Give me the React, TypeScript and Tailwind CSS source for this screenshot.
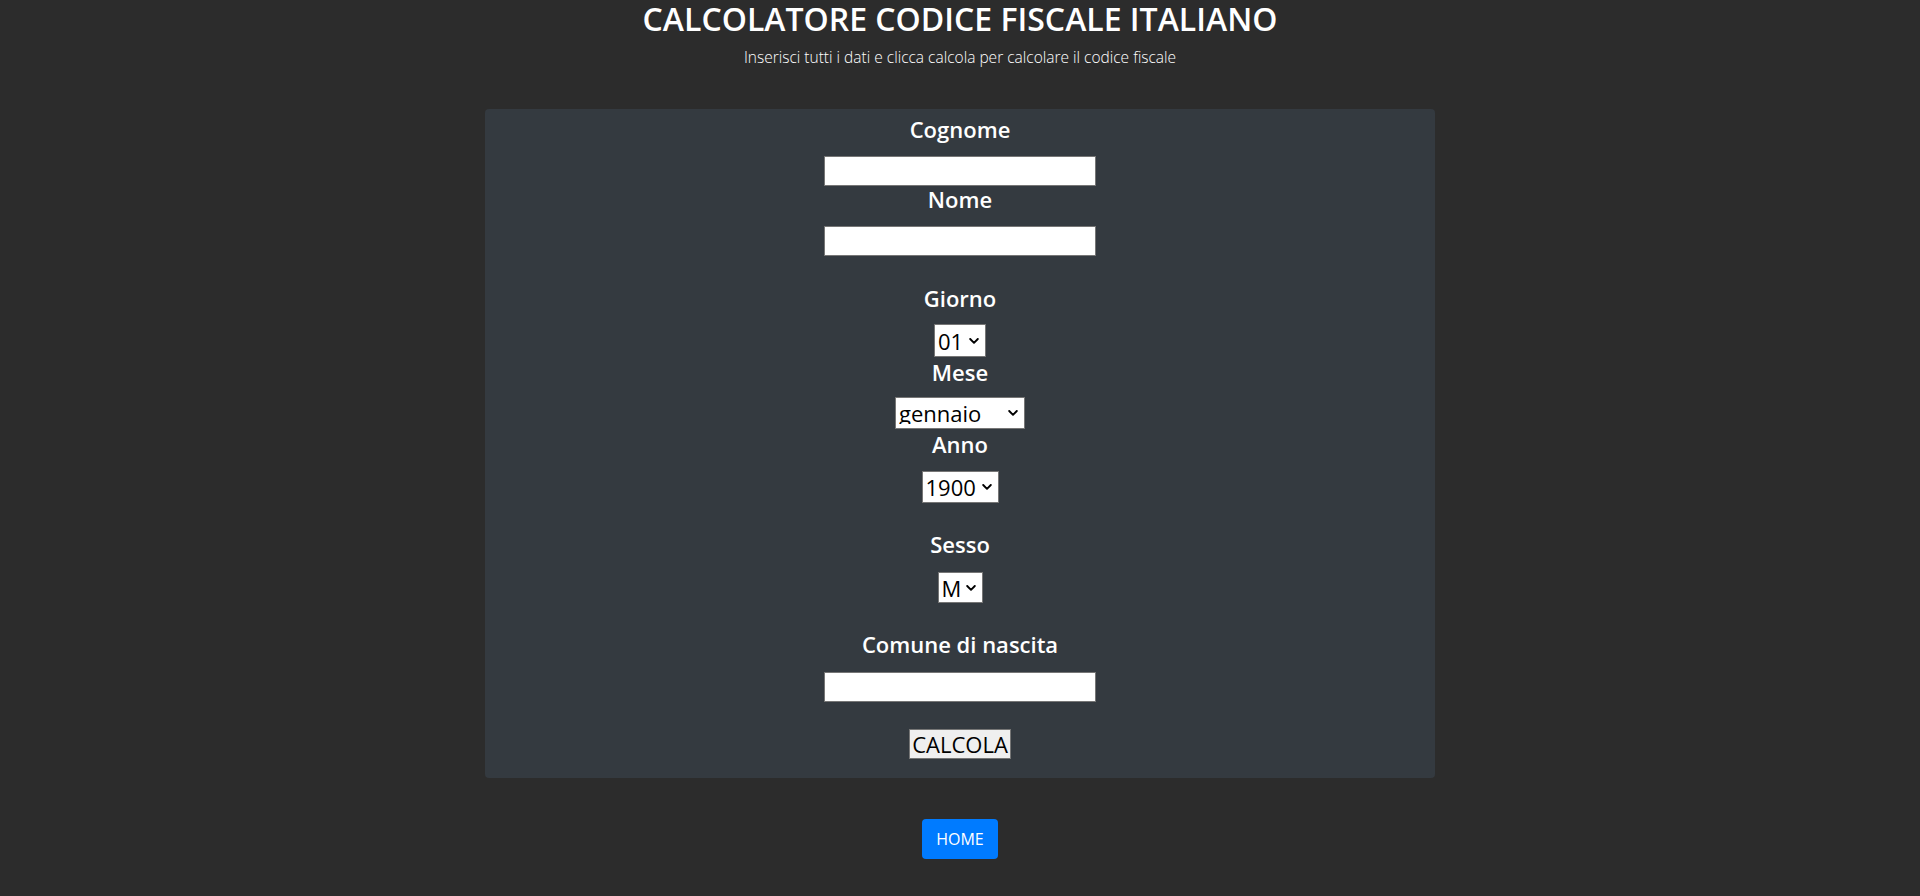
import React from "react";

const font = { fontFamily: '"Open Sans", "Noto Sans", Arial, sans-serif' };

function Chevron() {
  return (
    <svg width="10" height="6" viewBox="0 0 10 6" className="pointer-events-none absolute right-[7px] top-1/2 -translate-y-1/2">
      <path d="M1.2 1 L5 4.8 L8.8 1" fill="none" stroke="#000" strokeWidth="1.9" strokeLinecap="round" strokeLinejoin="round" />
    </svg>
  );
}

function Select({ value, options, w, h }: { value: string; options: string[]; w: string; h: string }) {
  return (
    <div className={`relative ${w} ${h}`}>
      <select
        defaultValue={value}
        className="h-full w-full appearance-none border border-[#767676] bg-white pl-[3px] pr-[18px] text-[22px] leading-none text-black outline-none"
      >
        {options.map((o) => (
          <option key={o} value={o}>
            {o}
          </option>
        ))}
      </select>
      <Chevron />
    </div>
  );
}

function Label({ children, cls }: { children: React.ReactNode; cls: string }) {
  return <div className={`h-[27px] text-[22px] font-semibold leading-[27px] text-white ${cls}`}>{children}</div>;
}

export default function App() {
  const days = Array.from({ length: 31 }, (_, i) => String(i + 1).padStart(2, "0"));
  const months = ["gennaio", "febbraio", "marzo", "aprile", "maggio", "giugno", "luglio", "agosto", "settembre", "ottobre", "novembre", "dicembre"];
  const years = Array.from({ length: 125 }, (_, i) => String(1900 + i));
  return (
    <div className="min-h-screen w-full bg-[#2c2c2c]" style={font}>
      <div className="flex flex-col items-center">
        <h2 className="h-[37px] text-[32px] font-semibold leading-[37px] text-white">CALCOLATORE CODICE FISCALE ITALIANO</h2>
        <p className="mt-[8px] h-[24px] text-[15.5px] font-light leading-[24px] text-white">
          Inserisci tutti i dati e clicca calcola per calcolare il codice fiscale
        </p>
      </div>
      <div className="mx-auto mt-[40px] flex w-[950px] flex-col items-center rounded-[4px] bg-[#343a40] pb-[19px] pt-[7px]">
        <Label cls="mb-[13px]">Cognome</Label>
        <input type="text" className="h-[30px] w-[272px] border border-[#767676] bg-white text-black outline-none" />
        <Label cls="mb-[13px]">Nome</Label>
        <input type="text" className="h-[30px] w-[272px] border border-[#767676] bg-white text-black outline-none" />

        <Label cls="mt-[29px] mb-[12px]">Giorno</Label>
        <Select value="01" options={days} w="w-[52px]" h="h-[33px]" />
        <Label cls="mt-[2px] mb-[11px]">Mese</Label>
        <Select value="gennaio" options={months} w="w-[130px]" h="h-[32px]" />
        <Label cls="mt-[2px] mb-[13px]">Anno</Label>
        <Select value="1900" options={years} w="w-[77px]" h="h-[32px]" />

        <Label cls="mt-[28px] mb-[14px]">Sesso</Label>
        <Select value="M" options={["M", "F"]} w="w-[45px]" h="h-[31px]" />

        <Label cls="mt-[28px] mb-[14px]">Comune di nascita</Label>
        <input type="text" className="h-[30px] w-[272px] border border-[#767676] bg-white text-black outline-none" />

        <button className="mt-[27px] h-[30px] w-[102px] border border-[#767676] bg-[#efefef] text-[22px] leading-none text-black">
          CALCOLA
        </button>
      </div>
      <div className="mt-[41px] flex justify-center">
        <button className="h-[40px] w-[76px] rounded-[4px] bg-[#007bff] text-[16px] text-white">HOME</button>
      </div>
    </div>
  );
}
